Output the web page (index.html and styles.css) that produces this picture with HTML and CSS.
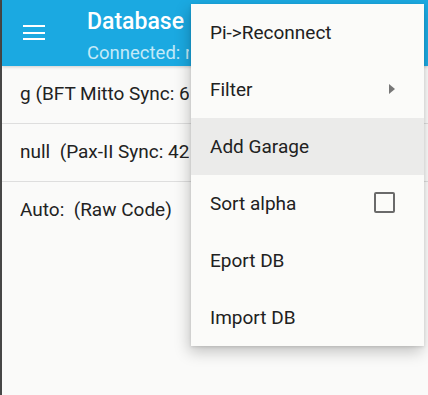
FILE: index.html
```html
<!DOCTYPE html>
<html>
<head>
    <link rel="stylesheet" href="styles.css">
</head>

<body>

    <div class="app">
        <div class="toolbar">
            <div class="menu-icon">
                <span></span>
                <span></span>
                <span></span>
            </div>
            <div class="titles">
                <div class="title">Database</div>
                <div class="subtitle">Connected: raspberrypi</div>
            </div>
        </div>

        <div class="list">
            <div class="row"><span class="label">g (BFT Mitto Sync: 64 bit rolling)</span></div>
            <div class="row"><span class="label">null&nbsp; (Pax-II Sync: 42 bit)</span></div>
            <div class="row no-line"><span class="label">Auto:&nbsp; (Raw Code)</span></div>
        </div>

        <div class="popup">
            <div class="item">Pi-&gt;Reconnect</div>
            <div class="item">Filter <span class="arrow"></span></div>
            <div class="item selected">Add Garage</div>
            <div class="item">Sort alpha <span class="check"></span></div>
            <div class="item">Eport DB</div>
            <div class="item">Import DB</div>
        </div>
    </div>

</body>

</html>
```

FILE: styles.css
```css
html,
body {
    margin: 0;
    padding: 0;
}

body {
    width: 428px;
    height: 395px;
    overflow: hidden;
    background-color: #fafaf9;
    font-family: Roboto, "Liberation Sans", sans-serif;
}

.app {
    position: relative;
    height: 395px;
    border-left: 2px solid #474747;
    box-sizing: border-box;
}

.toolbar {
    height: 66px;
    background-color: #1ba9e1;
    display: flex;
    align-items: flex-start;
    box-shadow: 0 1px 3px rgba(0, 0, 0, 0.18);
}

.menu-icon {
    width: 22px;
    margin: 25px 0 0 21px;
    display: flex;
    flex-direction: column;
    gap: 4.5px;
}

.menu-icon span {
    height: 2px;
    background-color: #fff;
}

.titles {
    margin-left: 42px;
    width: 102px;
    white-space: nowrap;
    overflow: hidden;
}

.title {
    color: #fff;
    font-size: 23px;
    font-weight: 500;
    margin-top: 8px;
    line-height: 28px;
}

.subtitle {
    color: #c4e9f8;
    font-size: 18.5px;
    margin-top: 6px;
    line-height: 22px;
}

.row {
    height: 57px;
    border-bottom: 1px solid #dedede;
    padding-left: 18px;
    display: flex;
    align-items: center;
    font-size: 19px;
    color: #222;
    white-space: nowrap;
}

.row .label {
    display: block;
    width: 169px;
    overflow: hidden;
    padding-bottom: 2px;
}

.row.no-line {
    border-bottom: none;
}

.popup {
    position: absolute;
    top: 4px;
    left: 189px;
    width: 233px;
    background-color: #fbfbf9;
    box-shadow: -2px 6px 14px rgba(0, 0, 0, 0.22), 0 1px 3px rgba(0, 0, 0, 0.12);
}

.item {
    height: 57px;
    padding: 0 26px 0 19px;
    display: flex;
    align-items: center;
    justify-content: space-between;
    font-size: 19px;
    color: #212121;
    padding-bottom: 1px;
    box-sizing: border-box;
}

.item.selected {
    background-color: #ebebea;
}

.arrow {
    width: 0;
    height: 0;
    border-top: 5px solid transparent;
    border-bottom: 5px solid transparent;
    border-left: 6px solid #777;
    margin-right: 3px;
}

.check {
    width: 17px;
    height: 17px;
    border: 2px solid #6a6a6a;
    border-radius: 2px;
    margin-right: 3px;
    margin-top: -2px;
}
```
